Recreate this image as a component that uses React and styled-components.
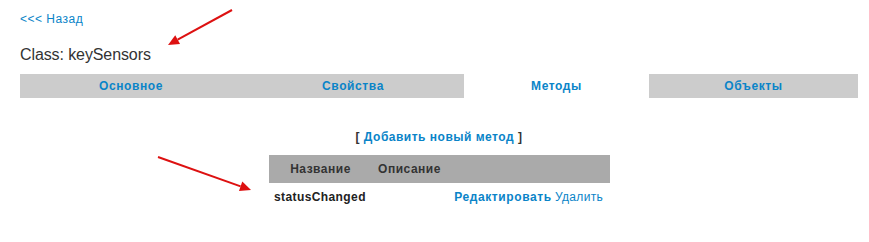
import React from "react";
import styled, { createGlobalStyle } from "styled-components";

const Global = createGlobalStyle`
  html, body { margin: 0; padding: 0; background: #fff; }
  body { font-family: "Liberation Sans", Arial, sans-serif; }
`;

const Page = styled.div`
  position: relative;
  width: 869px;
  height: 242px;
  padding: 12px 11px 0 20px;
  box-sizing: border-box;
`;

const BackLink = styled.a`
  display: block;
  font-size: 12px;
  line-height: 14px;
  color: #0a84c8;
  text-decoration: none;
  letter-spacing: 0.5px;
`;

const Title = styled.h1`
  margin: 20px 0 0;
  font-size: 16px;
  line-height: 18px;
  font-weight: normal;
  color: #333;
  letter-spacing: -0.1px;
`;

const Tabs = styled.div`
  margin-top: 10px;
  display: grid;
  grid-template-columns: 222px 222px 185px 209px;
  height: 24px;
`;

const Tab = styled.a`
  display: flex;
  align-items: center;
  justify-content: center;
  background: ${(p) => (p.$active ? "#fff" : "#cccccc")};
  color: #0a84c8;
  font-weight: bold;
  font-size: 12px;
  letter-spacing: 0.6px;
  text-decoration: none;
`;

const AddLine = styled.div`
  margin: 32px 0 0;
  text-align: center;
  font-size: 12px;
  line-height: 14px;
  font-weight: bold;
  color: #333;
  letter-spacing: 0.5px;
`;

const AddLink = styled.a`
  color: #0a84c8;
  text-decoration: none;
`;

const Table = styled.div`
  margin: 11px 0 0 249px;
  width: 341px;
`;

const Row = styled.div`
  display: grid;
  grid-template-columns: 103px 75px 1fr;
  height: 28px;
  align-items: center;
  background: ${(p) => (p.$head ? "#aaaaaa" : "transparent")};
`;

const HeadCell = styled.div`
  text-align: center;
  font-size: 12px;
  font-weight: bold;
  color: #333;
  letter-spacing: 0.5px;
`;

const NameCell = styled.div`
  padding-left: 5px;
  font-size: 12px;
  font-weight: bold;
  color: #222;
  letter-spacing: 0.4px;
  white-space: nowrap;
`;

const Actions = styled.div`
  grid-column: 3;
  text-align: right;
  padding-right: 7px;
  white-space: nowrap;
  font-size: 12px;
`;

const ActionLink = styled.a`
  color: #0a84c8;
  text-decoration: none;
  font-weight: ${(p) => (p.$bold ? "bold" : "normal")};
  letter-spacing: ${(p) => (p.$bold ? "0.6px" : "0.3px")};
`;

const Arrow = styled.svg`
  position: absolute;
  left: 0;
  top: 0;
  pointer-events: none;
`;

function ArrowShape({ x1, y1, x2, y2 }) {
  const dx = x2 - x1;
  const dy = y2 - y1;
  const len = Math.sqrt(dx * dx + dy * dy);
  const ux = dx / len;
  const uy = dy / len;
  const hl = 11;
  const hw = 5;
  const bx = x2 - ux * hl;
  const by = y2 - uy * hl;
  const px = -uy;
  const py = ux;
  return (
    <g>
      <line x1={x1} y1={y1} x2={bx} y2={by} stroke="#dd1111" strokeWidth="2" />
      <polygon
        points={`${x2},${y2} ${bx + px * hw},${by + py * hw} ${bx - px * hw},${by - py * hw}`}
        fill="#dd1111"
      />
    </g>
  );
}

export default function App() {
  return (
    <>
      <Global />
      <Page>
        <BackLink href="#">&lt;&lt;&lt; Назад</BackLink>
        <Title>Class: keySensors</Title>
        <Tabs>
          <Tab href="#">Основное</Tab>
          <Tab href="#">Свойства</Tab>
          <Tab href="#" $active>Методы</Tab>
          <Tab href="#">Объекты</Tab>
        </Tabs>
        <AddLine>
          [ <AddLink href="#">Добавить новый метод</AddLink> ]
        </AddLine>
        <Table>
          <Row $head>
            <HeadCell>Название</HeadCell>
            <HeadCell>Описание</HeadCell>
          </Row>
          <Row>
            <NameCell>statusChanged</NameCell>
            <Actions>
              <ActionLink href="#" $bold>Редактировать</ActionLink>{" "}
              <ActionLink href="#">Удалить</ActionLink>
            </Actions>
          </Row>
        </Table>
        <Arrow width="869" height="242" viewBox="0 0 869 242">
          <ArrowShape x1={232} y1={10} x2={168} y2={45} />
          <ArrowShape x1={158} y1={157} x2={251} y2={190} />
        </Arrow>
      </Page>
    </>
  );
}
